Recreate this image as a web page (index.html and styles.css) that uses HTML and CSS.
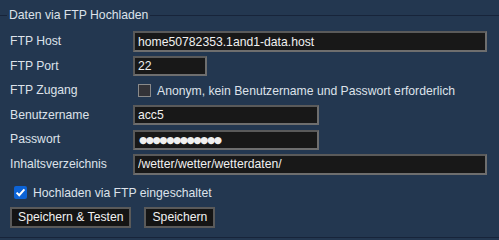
FILE: index.html
```html
<!DOCTYPE html>
<html>
<head>
<meta charset="utf-8">
<link rel="stylesheet" href="styles.css">
</head>
<body>
<fieldset class="panel">
  <legend class="legend">Daten via FTP Hochladen</legend>
  <div class="form">
    <label class="lbl">FTP Host</label>
    <input class="field wide" type="text" value="home50782353.1and1-data.host">
    <label class="lbl">FTP Port</label>
    <input class="field port" type="text" value="22">
    <label class="lbl">FTP Zugang</label>
    <div class="check-line"><span class="box"></span><span>Anonym, kein Benutzername und Passwort erforderlich</span></div>
    <label class="lbl">Benutzername</label>
    <input class="field mid" type="text" value="acc5">
    <label class="lbl">Passwort</label>
    <div class="field mid dots">●●●●●●●●●●●●</div>
    <label class="lbl">Inhaltsverzeichnis</label>
    <input class="field wide" type="text" value="/wetter/wetter/wetterdaten/">
  </div>
  <div class="enable"><span class="box on"><svg width="13" height="13" viewBox="0 0 13 13"><path d="M2.6 6.6 L5.2 9.2 L10.4 3.4" fill="none" stroke="#fff" stroke-width="2"/></svg></span><span>Hochladen via FTP eingeschaltet</span></div>
  <div class="buttons">
    <button class="btn">Speichern &amp; Testen</button>
    <button class="btn">Speichern</button>
  </div>
</fieldset>
</body>
</html>
```
FILE: styles.css
```css
html, body {
  margin: 0;
  padding: 0;
  background: #233750;
  width: 499px;
  height: 240px;
  overflow: hidden;
  font-family: "Liberation Sans", Arial, sans-serif;
  font-size: 12.2px;
  color: #dde2ea;
}
.panel {
  margin: 7px 0 0 0;
  padding: 0;
  border: none;
  border-top: 1px solid #17243a;
  border-bottom: 1px solid #17243a;
  height: 231px;
  box-sizing: border-box;
}
.legend {
  margin-left: 7px;
  padding: 0 2px;
  line-height: 16px;
  color: #dde2ea;
}
.form {
  display: grid;
  grid-template-columns: 123px auto;
  row-gap: 3.6px;
  padding: 8px 0 0 10px;
  align-items: center;
}
.lbl {
  line-height: 21px;
  white-space: nowrap;
}
.field {
  box-sizing: border-box;
  height: 21px;
  margin: 0;
  padding: 0 0 0 3px;
  background: #181818;
  border: 2px solid #5a5a5a;
  border-right-color: #6e6e6e;
  border-bottom-color: #6e6e6e;
  color: #f0f0f0;
  font-family: "Liberation Sans", Arial, sans-serif;
  font-size: 12.2px;
  outline: none;
}
.wide { width: 354px; }
.port { width: 74px; height: 20px; }
.mid { width: 186px; height: 20px; }
.dots {
  display: flex;
  align-items: center;
  font-size: 9.5px;
  letter-spacing: -1.5px;
  padding-left: 4px;
  font-family: "DejaVu Sans", sans-serif;
}
.check-line {
  display: flex;
  align-items: center;
  gap: 6px;
  height: 21px;
  padding-left: 5px;
}
.box {
  box-sizing: border-box;
  width: 13px;
  height: 13px;
  background: #333338;
  border: 1px solid #8a8a8a;
  display: inline-block;
  flex: none;
}
.box.on {
  background: #0c63d6;
  border: none;
  border-radius: 2px;
  display: flex;
}
.enable {
  display: flex;
  align-items: center;
  gap: 6px;
  padding-left: 14px;
  margin-top: 11px;
  height: 14px;
}
.buttons {
  display: flex;
  gap: 13px;
  padding-left: 10px;
  margin-top: 7px;
}
.btn {
  box-sizing: border-box;
  height: 21px;
  margin: 0;
  padding: 0 6px;
  background: #141414;
  border: 2px solid #5a5a5a;
  color: #f0f0f0;
  font-family: "Liberation Sans", Arial, sans-serif;
  font-size: 12.2px;
  line-height: 17px;
}
```
